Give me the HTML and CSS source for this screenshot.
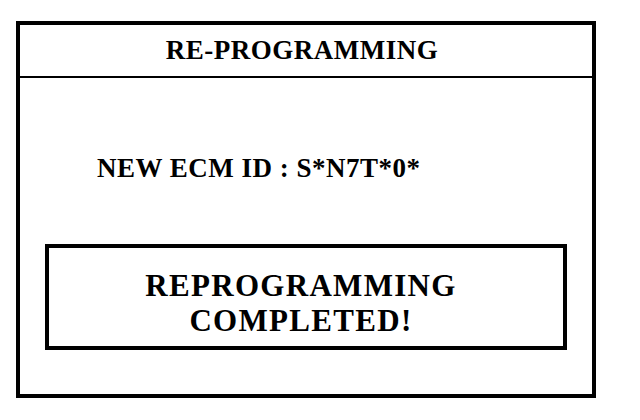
FILE: index.html
```html
<!DOCTYPE html>
<html lang="en">
<head>
    <meta charset="UTF-8">
    <title>Re-Programming</title>
    <link rel="stylesheet" href="styles.css">
</head>
<body>
    <div class="screen">
        <header class="screen-title">RE-PROGRAMMING</header>
        <section class="screen-body">
            <p class="ecm-id">NEW ECM ID : S*N7T*0*</p>
            <div class="result-box">
                <p>REPROGRAMMING</p>
                <p>COMPLETED!</p>
            </div>
        </section>
    </div>
</body>
</html>
```

FILE: styles.css
```css
body {
    margin: 0;
    background-color: #fff;
    color: #000;
    font-family: "Liberation Serif", "Times New Roman", serif;
    font-weight: bold;
}
p {
    margin: 0;
}
.screen {
    box-sizing: border-box;
    width: 580px;
    height: 377px;
    margin: 21px 0 0 16px;
    border: 4px solid #000;
}
.screen-title {
    height: 51px;
    line-height: 51px;
    padding-right: 8px;
    border-bottom: 2px solid #000;
    text-align: center;
    font-size: 27px;
    letter-spacing: 0.5px;
}
.screen-body {
    padding: 75px 25px 0 25px;
}
.ecm-id {
    padding-left: 52px;
    font-size: 27px;
    line-height: 30px;
    letter-spacing: 0.5px;
}
.result-box {
    margin-top: 61px;
    padding: 20px 10px 8px 0;
    border: 4px solid #000;
    text-align: center;
    font-size: 31px;
    line-height: 35px;
    letter-spacing: 1.3px;
}
```
